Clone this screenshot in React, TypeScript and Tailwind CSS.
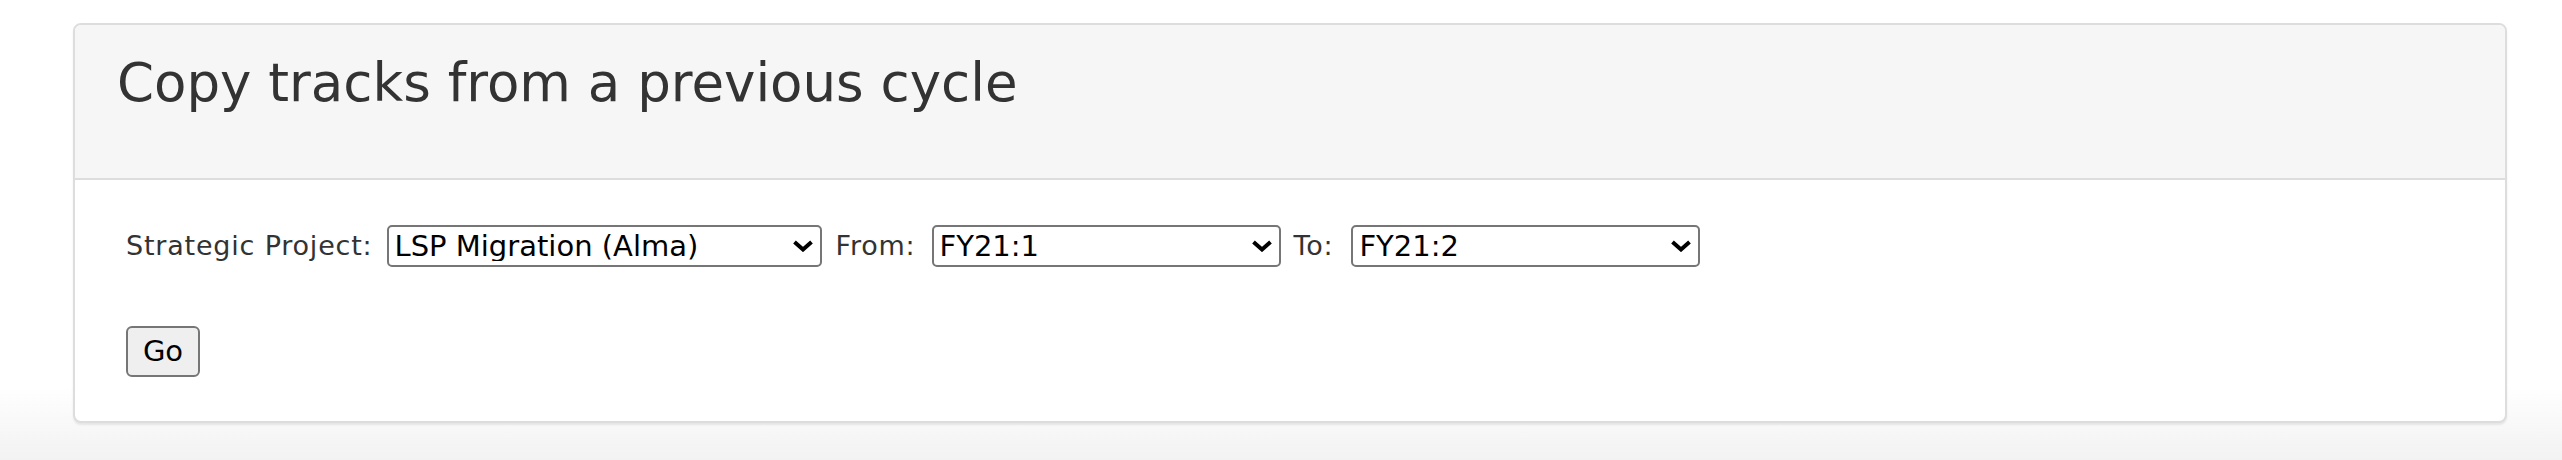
import React from 'react';

const labelCls = 'text-[27px] tracking-[0.8px] text-[#333] whitespace-nowrap';

function Chevron() {
  return (
    <svg
      className="pointer-events-none absolute right-[8px] top-1/2 -translate-y-1/2"
      width="22"
      height="12"
      viewBox="0 0 22 12"
      fill="none"
    >
      <path d="M2.5 2 L11 9.5 L19.5 2" stroke="#000" strokeWidth="4" strokeLinejoin="miter" />
    </svg>
  );
}

interface PickerProps {
  value: string;
  options: string[];
  width: string;
}

function Picker({ value, options, width }: PickerProps) {
  return (
    <div className={`relative ${width}`}>
      <select
        defaultValue={value}
        className="h-[42px] w-full appearance-none rounded-[5px] border-2 border-[#767676] bg-white pl-[6px] pr-[36px] text-[29px] leading-none text-black outline-none"
        style={{ fontFamily: '"DejaVu Sans", Verdana, sans-serif' }}
      >
        {options.map((o) => (
          <option key={o} value={o}>
            {o}
          </option>
        ))}
      </select>
      <Chevron />
    </div>
  );
}

export default function App() {
  const cycles = ['FY20:1', 'FY20:2', 'FY21:1', 'FY21:2', 'FY22:1'];

  return (
    <div
      className="h-[460px] w-full bg-[linear-gradient(180deg,#ffffff_0%,#ffffff_84%,#f2f2f2_100%)] pl-[73px] pr-[55px] pt-[23px]"
      style={{ fontFamily: '"DejaVu Sans", Verdana, sans-serif' }}
    >
      <div className="overflow-hidden rounded-[8px] border-2 border-[#dddddd] bg-white shadow-[0_2px_2px_rgba(0,0,0,0.08)]">
        {/* Panel heading */}
        <div className="h-[155px] border-b-2 border-[#dddddd] bg-[#f6f6f6] pl-[42px] pt-[27px]">
          <h3 className="text-[53px] font-normal leading-[62px] text-[#333]">
            Copy tracks from a previous cycle
          </h3>
        </div>

        {/* Panel body */}
        <div className="h-[241px] pl-[51px] pt-[45px]">
          <form className="flex flex-col items-start gap-[59px]" onSubmit={(e) => e.preventDefault()}>
            <div className="flex items-center">
              <label className={labelCls}>Strategic Project:</label>
              <div className="ml-[14px]">
                <Picker
                  value="LSP Migration (Alma)"
                  options={['LSP Migration (Alma)', 'Discovery Layer', 'Digital Preservation']}
                  width="w-[435px]"
                />
              </div>
              <label className={`${labelCls} ml-[14px]`}>From:</label>
              <div className="ml-[16px]">
                <Picker value="FY21:1" options={cycles} width="w-[349px]" />
              </div>
              <label className={`${labelCls} ml-[13px]`}>To:</label>
              <div className="ml-[18px]">
                <Picker value="FY21:2" options={cycles} width="w-[349px]" />
              </div>
            </div>

            <button
              type="submit"
              className="h-[51px] w-[74px] rounded-[6px] border-2 border-[#767676] bg-[#efefef] text-[29px] leading-none text-black"
            >
              Go
            </button>
          </form>
        </div>
      </div>
    </div>
  );
}
